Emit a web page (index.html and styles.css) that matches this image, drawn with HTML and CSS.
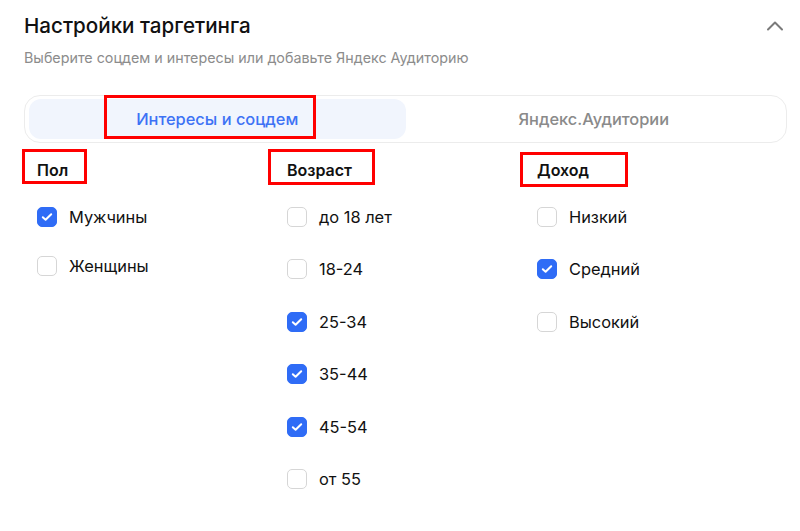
FILE: index.html
```html
<!DOCTYPE html>
<html lang="ru">
<head>
<meta charset="utf-8">
<title>Настройки таргетинга</title>
<link rel="stylesheet" href="styles.css">
</head>
<body>
<div class="panel">
  <div class="header">
    <h1 class="title">Настройки таргетинга</h1>
    <svg class="chevron" width="18" height="11" viewBox="0 0 18 11"><path d="M2 9.5 L9 2.5 L16 9.5" fill="none" stroke="#7a7a7a" stroke-width="2" stroke-linecap="round" stroke-linejoin="round"/></svg>
  </div>
  <p class="subtitle">Выберите соцдем и интересы или добавьте Яндекс Аудиторию</p>

  <div class="tabs">
    <div class="tab tab-active">Интересы и соцдем<span class="mark mark-tab"></span></div>
    <div class="tab">Яндекс.Аудитории</div>
  </div>

  <div class="columns">
    <div class="col col-sex">
      <div class="heading">Пол<span class="mark mark-sex"></span></div>
      <div class="list list-tight">
        <label class="row"><span class="box checked"><svg width="12" height="10" viewBox="0 0 12 10"><path d="M1.8 5.2 L4.6 7.8 L10.2 2.2" fill="none" stroke="#fff" stroke-width="2" stroke-linecap="round" stroke-linejoin="round"/></svg></span>Мужчины</label>
        <label class="row"><span class="box"></span>Женщины</label>
      </div>
    </div>
    <div class="col col-age">
      <div class="heading">Возраст<span class="mark mark-age"></span></div>
      <div class="list">
        <label class="row"><span class="box"></span>до 18 лет</label>
        <label class="row"><span class="box"></span>18-24</label>
        <label class="row"><span class="box checked"><svg width="12" height="10" viewBox="0 0 12 10"><path d="M1.8 5.2 L4.6 7.8 L10.2 2.2" fill="none" stroke="#fff" stroke-width="2" stroke-linecap="round" stroke-linejoin="round"/></svg></span>25-34</label>
        <label class="row"><span class="box checked"><svg width="12" height="10" viewBox="0 0 12 10"><path d="M1.8 5.2 L4.6 7.8 L10.2 2.2" fill="none" stroke="#fff" stroke-width="2" stroke-linecap="round" stroke-linejoin="round"/></svg></span>35-44</label>
        <label class="row"><span class="box checked"><svg width="12" height="10" viewBox="0 0 12 10"><path d="M1.8 5.2 L4.6 7.8 L10.2 2.2" fill="none" stroke="#fff" stroke-width="2" stroke-linecap="round" stroke-linejoin="round"/></svg></span>45-54</label>
        <label class="row"><span class="box"></span>от 55</label>
      </div>
    </div>
    <div class="col col-income">
      <div class="heading">Доход<span class="mark mark-income"></span></div>
      <div class="list">
        <label class="row"><span class="box"></span>Низкий</label>
        <label class="row"><span class="box checked"><svg width="12" height="10" viewBox="0 0 12 10"><path d="M1.8 5.2 L4.6 7.8 L10.2 2.2" fill="none" stroke="#fff" stroke-width="2" stroke-linecap="round" stroke-linejoin="round"/></svg></span>Средний</label>
        <label class="row"><span class="box"></span>Высокий</label>
      </div>
    </div>
  </div>
</div>
</body>
</html>
```

FILE: styles.css
```css
* { box-sizing: border-box; }

html, body {
  margin: 0;
  background: #ffffff;
}

body {
  font-family: Inter, Roboto, "Noto Sans", "Liberation Sans", sans-serif;
  color: #111111;
}

.panel {
  padding: 14px 13px 0 24px;
}

.header {
  display: flex;
  align-items: center;
  justify-content: space-between;
  height: 24px;
}

.title {
  margin: 0;
  font-size: 20.6px;
  line-height: 24px;
  font-weight: 500;
  color: #111111;
}

.chevron {
  display: block;
  margin-right: 3px;
  margin-top: -2px;
}

.subtitle {
  margin: 11px 0 0 0;
  font-size: 14.3px;
  line-height: 18px;
  color: #8c8c8c;
}

.tabs {
  margin-top: 28px;
  display: flex;
  height: 48px;
  padding: 3px 4px;
  border: 1px solid #ececec;
  border-radius: 16px;
}

.tab {
  position: relative;
  flex: 1;
  display: flex;
  align-items: center;
  justify-content: center;
  font-size: 16.4px;
  font-weight: 500;
  color: #8a8a8a;
  border-radius: 12px;
}

.tab-active {
  background: #f1f5fd;
  color: #3d72f5;
}

.mark {
  position: absolute;
  border: 3px solid #ff0000;
  pointer-events: none;
}

.mark-tab {
  left: 75px;
  top: -4px;
  width: 212px;
  height: 44px;
}

.columns {
  display: grid;
  grid-template-columns: 250px 250px 250px;
  margin-left: 13px;
  margin-top: 17px;
}

.heading {
  position: relative;
  font-size: 16px;
  line-height: 20px;
  font-weight: 600;
  color: #111111;
  height: 20px;
}

.mark-sex {
  left: -15px;
  top: -11px;
  width: 65px;
  height: 35px;
}

.mark-age {
  left: -19px;
  top: -11px;
  width: 107px;
  height: 36px;
}

.mark-income {
  left: -17px;
  top: -8px;
  width: 108px;
  height: 35px;
}

.list {
  display: flex;
  flex-direction: column;
  gap: 32.4px;
  margin-top: 27px;
}

.list-tight {
  gap: 28.5px;
}

.row {
  display: flex;
  align-items: center;
  gap: 12px;
  height: 20px;
  font-size: 16.4px;
  line-height: 20px;
  color: #111111;
}

.box {
  width: 20px;
  height: 20px;
  flex: none;
  border: 1px solid #d6d6d6;
  border-radius: 5px;
  background: #ffffff;
  display: flex;
  align-items: center;
  justify-content: center;
}

.box.checked {
  background: #2f6cf6;
  border-color: #2f6cf6;
}

.box svg {
  display: block;
}
```
